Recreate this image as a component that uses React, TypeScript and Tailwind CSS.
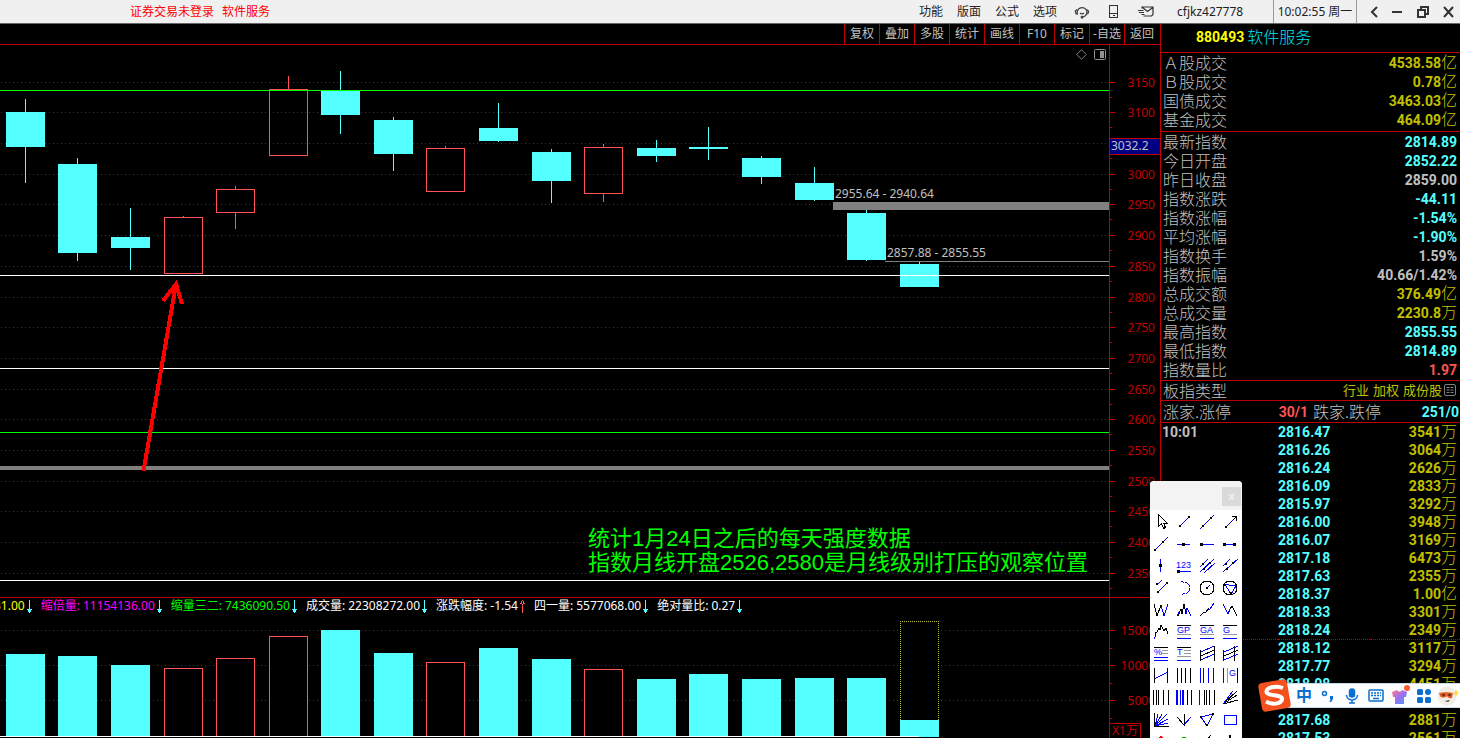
import type { ReactNode } from "react";
import clsx from "clsx";

const UI = "font-['Noto_Sans','Noto_Sans_CJK_SC',sans-serif]";
const NUM = "font-['Roboto','Noto_Sans_CJK_SC',sans-serif] text-sm leading-none font-bold";
const CJK = "font-['Noto_Sans_CJK_SC',sans-serif] text-base leading-none font-light";
const UNIT = "font-['Noto_Sans_CJK_SC',sans-serif] text-base leading-[0px] font-light";

const CYAN = "#54ffff";
const RISE = "#ff5454";
const RED = "#c00000";

interface Candle {
  x: number;
  high: number;
  low: number;
  top: number;
  bottom: number;
  vol: number;
  up?: boolean;
}

const candles: Candle[] = [
  { x: 6, high: 99, low: 183, top: 112, bottom: 147, vol: 654 },
  { x: 58, high: 158, low: 261, top: 164, bottom: 253, vol: 656 },
  { x: 111, high: 208, low: 270, top: 237, bottom: 248, vol: 665 },
  { x: 164, high: 216, low: 274, top: 217, bottom: 274, vol: 668, up: true },
  { x: 216, high: 186, low: 229, top: 189, bottom: 213, vol: 658, up: true },
  { x: 269, high: 76, low: 156, top: 89, bottom: 156, vol: 636, up: true },
  { x: 321, high: 71, low: 134, top: 91, bottom: 115, vol: 630 },
  { x: 374, high: 117, low: 171, top: 120, bottom: 154, vol: 653 },
  { x: 426, high: 146, low: 192, top: 148, bottom: 192, vol: 662, up: true },
  { x: 479, high: 103, low: 142, top: 128, bottom: 141, vol: 648 },
  { x: 532, high: 149, low: 203, top: 152, bottom: 181, vol: 659 },
  { x: 584, high: 144, low: 202, top: 147, bottom: 194, vol: 669, up: true },
  { x: 637, high: 140, low: 162, top: 148, bottom: 156, vol: 679 },
  { x: 689, high: 127, low: 160, top: 147, bottom: 149, vol: 674 },
  { x: 742, high: 156, low: 184, top: 158, bottom: 177, vol: 679 },
  { x: 795, high: 167, low: 201, top: 183, bottom: 200, vol: 678 },
  { x: 847, high: 210, low: 261, top: 213, bottom: 260, vol: 678 },
  { x: 900, high: 262, low: 287, top: 264, bottom: 287, vol: 720 },
];

const priceTicks = [
  { y: 82, label: "3150" },
  { y: 112, label: "3100" },
  { y: 143, label: "" },
  { y: 174, label: "3000" },
  { y: 204, label: "2950" },
  { y: 235, label: "2900" },
  { y: 266, label: "2850" },
  { y: 297, label: "2800" },
  { y: 327, label: "2750" },
  { y: 358, label: "2700" },
  { y: 389, label: "2650" },
  { y: 419, label: "2600" },
  { y: 450, label: "2550" },
  { y: 481, label: "2500" },
  { y: 511, label: "2450" },
  { y: 542, label: "2400" },
  { y: 573, label: "2350" },
];

const volumeTicks = [
  { y: 630, label: "15000" },
  { y: 665, label: "10000" },
  { y: 700, label: "5000" },
];

const turnover = [
  ["Ａ股成交", "4538.58", "亿"],
  ["Ｂ股成交", "0.78", "亿"],
  ["国债成交", "3463.03", "亿"],
  ["基金成交", "464.09", "亿"],
];

const indexStats = [
  ["最新指数", "2814.89", "", "text-[#54ffff]"],
  ["今日开盘", "2852.22", "", "text-[#54ffff]"],
  ["昨日收盘", "2859.00", "", "text-[#c0c0c0]"],
  ["指数涨跌", "-44.11", "", "text-[#54ffff]"],
  ["指数涨幅", "-1.54%", "", "text-[#54ffff]"],
  ["平均涨幅", "-1.90%", "", "text-[#54ffff]"],
  ["指数换手", "1.59%", "", "text-[#c0c0c0]"],
  ["指数振幅", "40.66/1.42%", "", "text-[#c0c0c0]"],
  ["总成交额", "376.49", "亿", "text-[#c0c000]"],
  ["总成交量", "2230.8", "万", "text-[#c0c000]"],
  ["最高指数", "2855.55", "", "text-[#54ffff]"],
  ["最低指数", "2814.89", "", "text-[#54ffff]"],
  ["指数量比", "1.97", "", "text-[#ff5454]"],
];

const deals = [
  ["10:01", "2816.47", "3541", "万"],
  ["", "2816.26", "3064", "万"],
  ["", "2816.24", "2626", "万"],
  ["", "2816.09", "2833", "万"],
  ["", "2815.97", "3292", "万"],
  ["", "2816.00", "3948", "万"],
  ["", "2816.07", "3169", "万"],
  ["", "2817.18", "6473", "万"],
  ["", "2817.63", "2355", "万"],
  ["", "2818.37", "1.00", "亿"],
  ["", "2818.33", "3301", "万"],
  ["", "2818.24", "2349", "万"],
  ["", "2818.12", "3117", "万"],
  ["", "2817.77", "3294", "万"],
  ["", "2818.08", "4451", "万"],
  ["", "", "", ""],
  ["", "2817.68", "2881", "万"],
  ["", "2817.53", "2561", "万"],
];

const indicators = [
  { name: "", value: "31.00", color: "text-[#ffff00]" },
  { name: "缩倍量:", value: "11154136.00", color: "text-[#ff00ff]" },
  { name: "缩量三二:", value: "7436090.50", color: "text-[#00ff00]" },
  { name: "成交量:", value: "22308272.00", color: "text-white" },
  { name: "涨跌幅度:", value: "-1.54", color: "text-white", up: true },
  { name: "四一量:", value: "5577068.00", color: "text-white" },
  { name: "绝对量比:", value: "0.27", color: "text-white" },
];

function TitleBar() {
  const iconBtn = "flex w-8 items-center justify-center";
  return (
    <header className={clsx(UI, "flex h-6 shrink-0 items-stretch border-b border-[#666] bg-[#f0f0f0] text-xs text-[#222]")}>
      <div className="flex flex-1 items-center gap-2 pl-[130px] text-[#ff0000]">
        <a href="#login">证券交易未登录</a>
        <a href="#board">软件服务</a>
      </div>
      <nav className="flex pr-[2px]">
        {["功能", "版面", "公式", "选项"].map((m) => (
          <button key={m} className="w-[38px]">{m}</button>
        ))}
      </nav>
      <button className={iconBtn} aria-label="客服">
        <svg width="16" height="14" viewBox="0 0 16 14" fill="none" stroke="#444" strokeWidth="1.3">
          <path d="M3.5 9.500A5 5 0 1 1 13 6.500c0 3-2 5.200-5 5.700" />
          <path d="M3.200 4.500 1.300 6l.7 2.600 1.700.4M13 4.600l1.600 1.600-.6 2.300-1.500.3M6 8c1.300 1.200 2.700 1.200 4 0" />
          <circle cx="8" cy="12.200" r="0.800" fill="#444" />
        </svg>
      </button>
      <button className={iconBtn} aria-label="手机">
        <svg width="10" height="14" viewBox="0 0 10 14" fill="none" stroke="#333" shapeRendering="crispEdges">
          <rect x="0.5" y="0.5" width="8" height="12" />
          <path d="M0 8.5h9M4 10.5h2" />
        </svg>
      </button>
      <button className={iconBtn} aria-label="邮件">
        <svg width="16" height="12" viewBox="0 0 16 12" fill="none" stroke="#333" strokeWidth="1.2">
          <path d="M4 2.5V1h11v7.5L13.5 10H5.5M4.5 1.5l5 4 5.3-4M0 4.5h5.5M1 6.5h5M3.5 8.5h3" />
        </svg>
      </button>
      <span className="flex w-[111px] items-center pl-[15px]">cfjkz427778</span>
      <span className="flex w-[84px] items-center justify-center border-x border-[#999] whitespace-pre">10:02:55 周一</span>
      <div className="flex w-[103px] items-center justify-between pr-[6px] pl-[13px]">
        <button aria-label="后退">
          <svg width="8" height="12" viewBox="0 0 8 12" fill="none" stroke="#333" strokeWidth="2"><path d="M7 1 2 6l5 5" /></svg>
        </button>
        <button aria-label="最小化">
          <svg width="10" height="12" viewBox="0 0 10 12"><path d="M0 5h10v2H0z" fill="#333" /></svg>
        </button>
        <button aria-label="还原">
          <svg width="12" height="12" viewBox="0 0 12 12" fill="none" stroke="#333" strokeWidth="2"><path d="M1 4h7v7H1zM4 4V1h7v7H8" /></svg>
        </button>
        <button aria-label="关闭">
          <svg width="11" height="12" viewBox="0 0 11 12" fill="none" stroke="#333" strokeWidth="2"><path d="m1 1 9 10M10 1 1 11" /></svg>
        </button>
      </div>
    </header>
  );
}

function Toolbar() {
  return (
    <div className={clsx(UI, "flex h-[21px] shrink-0 justify-end border-b border-[#c00000] pr-px text-xs text-[#c0c0c0]")}>
      {["复权", "叠加", "多股", "统计", "画线", "F10", "标记", "-自选", "返回"].map((t) => (
        <button key={t} className="w-[35px] border-l border-[#c00000] whitespace-nowrap">{t}</button>
      ))}
    </div>
  );
}

function Grid({ ticks }: { ticks: { y: number }[] }) {
  return (
    <>
      {ticks.map((t) => (
        <line key={t.y} x1="1" x2="100%" y1={t.y + 0.5} y2={t.y + 0.5} stroke={RED} strokeDasharray="1 3" />
      ))}
    </>
  );
}

function HLine({ y, color, h = 1, x = 0 }: { y: number; color: string; h?: number; x?: number }) {
  return <rect x={x} y={y} width="100%" height={h} fill={color} />;
}

function PricePanel() {
  return (
    <section className="flex min-h-0 flex-1 border-b border-[#c00000]">
      <div className="relative min-w-0 flex-1">
        <svg className="block h-full w-full" shapeRendering="crispEdges">
          {/* y values below count from the window top, the panel starts at 45 */}
          <g transform="translate(0,-45)">
            <Grid ticks={priceTicks} />
            {candles.map((c) =>
              c.up ? (
                <g key={c.x} stroke={RISE} fill="none">
                  <path d={`M${c.x + 19.5} ${c.high}V${c.top}M${c.x + 19.5} ${c.bottom}V${c.low}`} />
                  <rect x={c.x + 0.5} y={c.top + 0.5} width="38" height={c.bottom - c.top - 1} />
                </g>
              ) : (
                <g key={c.x} fill={CYAN}>
                  <rect x={c.x + 19} y={c.high} width="1" height={c.low - c.high} />
                  <rect x={c.x} y={c.top} width="39" height={c.bottom - c.top} />
                </g>
              ),
            )}
            <HLine y={90} color="#00ff00" />
            <HLine x={833} y={202} h={8} color="#808080" />
            <HLine x={885} y={261} color="#808080" />
            <HLine y={275} color="#fff" />
            <HLine y={368} color="#fff" />
            <HLine y={432} color="#00ff00" />
            <HLine y={466} h={4} color="#808080" />
            <HLine y={580} color="#fff" />
            <path d="M143.5 471 176 284M163 301l13-17 6 20" fill="none" stroke="#ff0000" strokeWidth="4" />
            <g className={clsx(UI, "text-xs")} fill="#c0c0c0">
              <text x="835" y="198">2955.64 - 2940.64</text>
              <text x="887" y="257">2857.88 - 2855.55</text>
            </g>
            <g className="font-['Liberation_Sans','Noto_Sans_CJK_SC',sans-serif] text-[22px]" fill="#00ff00">
              <text x="588" y="546">统计1月24日之后的每天强度数据</text>
              <text x="588" y="570">指数月线开盘2526,2580是月线级别打压的观察位置</text>
            </g>
          </g>
        </svg>
        <div className="absolute top-1 right-[3px] flex gap-[7px]">
          <button aria-label="标注">
            <svg width="11" height="11" viewBox="0 0 11 11" fill="none" stroke="#808080"><path d="M5.5.7 10.3 5.5 5.5 10.3.7 5.5z" /></svg>
          </button>
          <button aria-label="侧栏">
            <svg width="12" height="11" viewBox="0 0 12 11"><rect x="0.5" y="0.5" width="11" height="10" rx="1" fill="none" stroke="#909090" /><path d="M6 2h4v7H6z" fill="#909090" /></svg>
          </button>
        </div>
      </div>
      <svg className={clsx(UI, "h-full w-[51px] shrink-0 border-l border-[#c00000] text-xs")} shapeRendering="crispEdges">
        <g transform="translate(0,-45)" fill={RED}>
          {priceTicks.map((t) => (
            <g key={t.y}>
              <rect x="0" y={t.y} width="5" height="1" />
              <rect x="0" y={t.y + 15} width="2" height="1" />
              <text x="45" y={t.y + 5} textAnchor="end">{t.label}</text>
            </g>
          ))}
          <rect x="0" y="138" width="51" height="17" />
          <rect x="0" y="139" width="51" height="15" fill="#000080" />
          <text x="1" y="150" fill="#c0c0c0">3032.2</text>
        </g>
      </svg>
    </section>
  );
}

function IndicatorBar() {
  return (
    <div className="flex h-4 gap-2 overflow-hidden text-xs leading-4 whitespace-nowrap">
      {indicators.map((it, i) => (
        <span key={i} className={clsx("flex shrink-0 items-center", it.color, i === 0 && "-ml-[6px]")}>
          {it.name && <span className="mr-[3px]">{it.name}</span>}
          {it.value}
          <svg width="8" height="13" viewBox="0 0 8 13" fill={it.up ? RISE : CYAN} shapeRendering="crispEdges">
            <path d={it.up ? "M4 0h1v13H4zM2 4h5V3H6V1H3v2H2z" : "M4 0h1v13H4zM2 9h5v1H6v2H3v-2H2z"} />
          </svg>
        </span>
      ))}
    </div>
  );
}

function VolumePanel() {
  return (
    <section className={clsx(UI, "flex h-[140px] shrink-0")}>
      <div className="flex min-w-0 flex-1 flex-col">
        <IndicatorBar />
        <svg className="block w-full flex-1" shapeRendering="crispEdges">
          <g transform="translate(0,-614)">
            <Grid ticks={volumeTicks} />
            {candles.map((c) =>
              c.up ? (
                <rect key={c.x} x={c.x + 0.5} y={c.vol + 0.5} width="38" height={736 - c.vol} fill="#000" stroke={RISE} />
              ) : (
                <rect key={c.x} x={c.x} y={c.vol} width="39" height={737 - c.vol} fill={CYAN} />
              ),
            )}
            <path d="M900.5 720V621.5H938.5V720" fill="#000" stroke="#c0c040" strokeDasharray="1 1" />
            <rect x="0" y="736" width="919" height="1" fill="#fff" />
          </g>
        </svg>
      </div>
      <svg className="h-full w-[51px] shrink-0 border-l border-[#c00000] text-xs" shapeRendering="crispEdges">
        <g transform="translate(0,-598)" fill={RED}>
          {volumeTicks.map((t) => (
            <g key={t.y}>
              <rect x="0" y={t.y} width="5" height="1" />
              <rect x="0" y={t.y + 18} width="2" height="1" />
              <text x="45" y={t.y + 5} textAnchor="end">{t.label}</text>
            </g>
          ))}
          <rect x="-0.5" y="723.5" width="31" height="16" fill="none" stroke={RED} />
          <text x="2" y="735">X1万</text>
        </g>
      </svg>
    </section>
  );
}

function StatTable({ rows, color }: { rows: string[][]; color?: string }) {
  return (
    <table className="w-full">
      <tbody>
        {rows.map(([label, value, unit, tone]) => (
          <tr key={label} className="h-[19px]">
            <th scope="row" className={clsx(CJK, "p-0 pb-[2px] text-left text-[#c0c0c0]")}>{label}</th>
            <td className={clsx(NUM, "p-0 text-right", tone ?? color)}>
              {value}
              {unit && <span className={UNIT}>{unit}</span>}
            </td>
          </tr>
        ))}
      </tbody>
    </table>
  );
}

function QuotePanel() {
  return (
    <aside className="flex w-[300px] shrink-0 flex-col overflow-hidden border-l border-[#c00000]">
      <h1 className="flex h-[29px] shrink-0 items-center gap-[3px] border-b border-[#c00000] pb-[2px] pl-[35px]">
        <span className={clsx(NUM, "text-[#ffff00]")}>880493</span>
        <span className={clsx(CJK, "pb-[2px] text-[#00e0f0]")}>软件服务</span>
      </h1>
      <div className="shrink-0 border-b border-[#c00000] pr-[3px] pb-[2px] pl-[2px]">
        <StatTable rows={turnover} color="text-[#c0c000]" />
      </div>
      <div className="shrink-0 border-b border-[#c00000] pr-[3px] pb-px pl-[2px]">
        <StatTable rows={indexStats} />
      </div>
      <div className="flex h-5 shrink-0 items-center justify-between border-b border-[#c00000] pr-1 pb-[2px] pl-[2px]">
        <span className={clsx(CJK, "text-[#c0c0c0]")}>板指类型</span>
        <span className="flex items-center gap-1 font-['Noto_Sans_CJK_SC',sans-serif] text-[13px] leading-none text-[#c0c000]">
          <a href="#industry">行业</a>
          <a href="#weight">加权</a>
          <a href="#members">成份股</a>
          <svg className="-ml-[2px]" width="12" height="12" viewBox="0 0 12 12" fill="none" stroke="#808080">
            <rect x="0.5" y="0.5" width="11" height="11" rx="1.5" />
            <path d="M2.5 3.5h3M2.5 6h3M2.5 8.5h3M6.5 3.5h3M6.5 6h3M6.5 8.5h3" />
          </svg>
        </span>
      </div>
      <div className="flex h-[22px] shrink-0 items-center border-b border-[#c00000] pr-px pl-[2px] text-[#c0c0c0]">
        <span className={clsx(CJK, "pb-[2px]")}>涨家.涨停</span>
        <span className={clsx(NUM, "flex-1 text-right text-[#ff5454]")}>30/1</span>
        <span className={clsx(CJK, "ml-[5px] pb-[2px]")}>跌家.跌停</span>
        <span className={clsx(NUM, "w-[78px] text-right text-[#54ffff]")}>251/0</span>
      </div>
      <table className="w-full">
        <tbody>
          {deals.map(([time, price, amount, unit], i) => (
            <tr key={i} className={clsx("h-[18px]", i === 11 && "border-b border-dotted border-[#c00000]")}>
              <td className={clsx(NUM, "w-[117px] p-0 pl-px text-[#c0c0c0]")}>{time}</td>
              <td className={clsx(NUM, "p-0 text-[#54ffff]")}>{price}</td>
              <td className={clsx(NUM, "p-0 pr-[3px] text-right text-[#c0c000]")}>
                {amount}
                <span className={UNIT}>{unit}</span>
              </td>
            </tr>
          ))}
        </tbody>
      </table>
    </aside>
  );
}

const K = (d: string) => <path d={d} stroke="#000" />;
const B = (d: string) => <path d={d} stroke="#0000ff" />;
const G = (d: string) => <path d={d} stroke="#999" />;
const dot = (x: number, y: number, s = 2) => <rect x={x - s / 2} y={y - s / 2} width={s} height={s} fill="#000" stroke="none" />;
const mark = (t: string, x = 4, y = 13) => (
  <text x={x} y={y} className="font-['Liberation_Sans',sans-serif] text-[9px]" fill="#0000ff" stroke="none">{t}</text>
);

const tools: { name: string; art: ReactNode }[] = [
  { name: "选择", art: <path d="M8.5 4.5v12l3-3 2 5 2-1-2-4.500h3.500z" fill="#fff" stroke="#000" /> },
  { name: "线段", art: <>{B("M7 16 16 7")}{dot(7, 16)}{dot(16, 7)}</> },
  { name: "直线", art: <>{B("M4 19 18 5")}{dot(7, 16)}{dot(15, 8)}</> },
  { name: "箭头", art: <>{B("M7 17 17 7")}{K("M13 6.5h4.500v4.500M17 7l-3 3")}{dot(7, 17)}</> },
  { name: "射线", art: <>{B("M5 18 18 5")}{dot(5, 18)}{dot(13, 10)}</> },
  { name: "水平线", art: <>{B("M4 12.5h13")}{dot(10.5, 12.5, 3)}</> },
  { name: "水平射线", art: <>{B("M4 12.5h14")}{dot(5.5, 12.5, 3)}</> },
  { name: "水平线段", art: <>{B("M4 12.5h13")}{dot(5.5, 12.5, 3)}{dot(15.5, 12.5, 3)}</> },
  { name: "垂直线", art: <>{B("M10.5 5v13")}{dot(10.5, 11.5, 3)}</> },
  { name: "价格标注", art: <>{mark("123", 3, 14)}{B("M4 17.5h14")}{dot(5.5, 17.5, 3)}</> },
  { name: "平行线组", art: <>{B("M4 13 12 5M4 18 18 5M8 19 19 9")}{dot(7, 10)}{dot(8, 15)}{dot(14, 9)}</> },
  { name: "平行线", art: <>{B("M4 12 11 5M4 18 19 5")}{dot(7, 10)}{dot(8, 15)}{dot(14, 9)}</> },
  { name: "通道", art: <>{B("M7 9 12 4M7 17 18 6")}{dot(7, 8)}{dot(8, 16)}{dot(17, 7)}</> },
  { name: "弧线", art: <path d="M8 6c12-1 12 13 0 12" fill="none" stroke="#0000ff" strokeDasharray="3 1" /> },
  { name: "圆", art: <><circle cx="11" cy="12" r="7" stroke="#000" />{B("M11 12l3-3")}{dot(11, 12)}</> },
  { name: "外接圆", art: <><circle cx="11" cy="12" r="7" stroke="#000" />{B("M6 8.5l11 1.500-5 8z")}{dot(6, 9)}{dot(12, 17)}</> },
  { name: "W形", art: <>{K("M4 6l3 12 4-11")}{B("M11 7l3 11 4-12")}</> },
  { name: "头肩", art: <>{K("M5 18l3-7 1 5 2-10 2 10")}{B("M4 18l2-4M13 16l1-6 4 8")}</> },
  { name: "上升浪", art: <>{K("M4 18l4-4h2l3-4")}{B("M12 11h2l4-6")}</> },
  { name: "下降浪", art: <>{B("M4 6l5 10 2-5")}{K("M11 11l2-3 5 10")}</> },
  { name: "八浪", art: <>{B("M4 19l2-4")}{K("M5 17v-5h2l2-4 1 2 1-5 3 6 2-3 2 6")}</> },
  { name: "黄金价位", art: <>{K("M4 5.5h14")}{mark("GP")}{G("M4 14.5h14")}{B("M4 18.5h14")}</> },
  { name: "黄金目标", art: <>{K("M4 5.5h14")}{mark("GA")}{G("M4 14.5h14")}{B("M4 18.5h14")}</> },
  { name: "黄金分割", art: <>{K("M4 5.5h14")}{mark("G")}{G("M4 14.5h14")}{B("M4 18.5h14")}</> },
  { name: "百分比", art: <>{K("M4 5.5h14")}{mark("%")}{G("M12 8.5h6M12 11.5h6")}{B("M4 15.5h14M4 18.5h14")}</> },
  { name: "波段线", art: <>{K("M4 5.5h14")}{mark("T", 4, 13)}{G("M11 8.5h7M11 11.5h7M4 14.5h14")}{B("M4 18.5h14")}</> },
  { name: "线性回归带", art: <>{K("M4.5 8v11M18.500 4v15M5 14l13-6")}{B("M5 10l13-6M5 18l13-6")}</> },
  { name: "延长回归带", art: <>{K("M4.5 8v11M15.500 4v15M5 14l14-6")}{B("M5 10l14-6M5 18l14-6")}</> },
  { name: "回归线", art: <>{K("M4.5 4v15M17.500 4v15")}{B("M5 14.5l12-6")}</> },
  { name: "周期线", art: K("M4.5 4v15M8.500 4v15M12.500 4v15M17.500 4v15") },
  { name: "等周期", art: B("M4.5 4v15M7.500 4v15M12.500 4v15M17.500 4v15") },
  { name: "黄金周期", art: <>{B("M4.5 4v15")}{G("M8.5 4v15")}{mark("G", 10, 12)}{K("M18.5 4v15")}</> },
  { name: "斐波那契", art: K("M3.5 4v15M6.500 4v15M8.500 4v15M13.500 4v15M18.500 4v15") },
  { name: "江恩周期", art: <>{B("M3.5 4v15M4.500 4v15M7.500 4v15M9.500 4v15M10.500 4v15")}{K("M14.5 4v15M18.500 4v15")}</> },
  { name: "阳历周期", art: <>{B("M3.5 4v15")}{K("M8.5 4v15M10.500 4v15M13.500 4v15M18.500 4v15")}</> },
  { name: "阻速线", art: <>{K("M4 18 18 5M4 18l14-9")}{B("M4 18l10-13")}{K("M4 18l15-4")}</> },
  { name: "江恩角度", art: <>{K("M4.5 5v14M4 18.5h15")}{B("M5 18l3-12M5 18 12 6M5 18 17 6M5 18l13-7M5 18l13-3")}</> },
  { name: "安德鲁叉", art: <>{K("M4 9l7 8V6")}{B("M11 17l7-8")}</> },
  { name: "三角形", art: <>{B("M5 9l12-3-6 12z")}{dot(5, 9)}{dot(17, 6)}{dot(11, 17)}</> },
  { name: "矩形", art: B("M5.5 7.5h12v9h-12z") },
  { name: "买入标记", art: <path d="M11 5 6 11h3v6h4v-6h3z" fill="#ff0000" stroke="none" /> },
  { name: "卖出标记", art: <path d="M11 17 6 11h3V7h4v4h3z" fill="#00a000" stroke="none" /> },
  { name: "画笔", art: <>{K("M6 16 15 5")}{B("M4 18l3-2")}</> },
  { name: "文字", art: K("M11 5 7 16M11 5l4 11M8 12h6") },
];

function DrawPalette() {
  return (
    <div className="absolute top-[481px] right-[218px] bottom-0 w-[92px] overflow-hidden rounded-t bg-white">
      <div className="flex h-[29px] items-center justify-end bg-[#f3f3f3] pt-[2px] pr-px">
        <button aria-label="关闭画线工具" className="h-[19px] w-[19px] bg-[#dadada] font-['Liberation_Sans',sans-serif] text-[11px] leading-none font-bold text-[#f3f3f3]">x</button>
      </div>
      <div className="grid grid-cols-4">
        {tools.map((t) => (
          <button key={t.name} aria-label={t.name} className="h-[22px]">
            <svg className="block" width="23" height="22" viewBox="0 0 23 22" fill="none" shapeRendering="crispEdges">{t.art}</svg>
          </button>
        ))}
      </div>
    </div>
  );
}

function ImeBar() {
  const cell = "flex h-full w-6 items-center justify-center";
  return (
    <div className="absolute right-0 bottom-[30px] flex h-[25px] w-[198px] items-center rounded-l-md border-y border-[#c8dcf0] bg-[#fbfdff] pl-[30px]">
      <svg className="absolute -top-[5px] -left-1" width="33" height="33" viewBox="0 0 33 33">
        <rect x="2" y="2" width="29" height="29" rx="4" fill="#f4511e" transform="rotate(-10 16.500 16.500)" />
        <path d="M25 9C18 6 8 8.500 8.500 13c.5 4 15 2.500 15.500 6.500.4 5-9 7-16 3" fill="none" stroke="#fff" strokeWidth="4" />
      </svg>
      <button className={clsx(cell, "pb-[3px] font-['Noto_Sans_CJK_SC',sans-serif] text-base leading-none font-bold text-[#0b6fd0]")}>中</button>
      <button className={cell} aria-label="标点">
        <svg width="14" height="14" viewBox="0 0 14 14" fill="none" stroke="#0b6fd0" strokeWidth="1.500">
          <circle cx="3.500" cy="4.500" r="2" />
          <path d="M9 7h3v3l-2 3H8.500l1-3H9z" fill="#0b6fd0" stroke="none" />
        </svg>
      </button>
      <button className={cell} aria-label="语音">
        <svg width="14" height="16" viewBox="0 0 14 16" fill="none" stroke="#0b6fd0" strokeWidth="1.500">
          <rect x="4.500" y="1" width="5" height="8" rx="2.500" fill="#0b6fd0" />
          <path d="M1.500 7c0 6.500 11 6.500 11 0M7 12v3M4 15h6" />
        </svg>
      </button>
      <button className={cell} aria-label="软键盘">
        <svg width="16" height="13" viewBox="0 0 16 13" fill="none" stroke="#0b6fd0" strokeWidth="1.500">
          <rect x="1" y="1" width="14" height="11" rx="1" />
          <path d="M3 4h10M3 6.500h10" strokeDasharray="2 1" />
          <path d="M5 9.500h6" />
        </svg>
      </button>
      <button className={cell} aria-label="皮肤">
        <svg width="20" height="24" viewBox="0 0 20 24">
          <defs>
            <linearGradient id="shirt" x1="0" y1="0" x2="1" y2="1">
              <stop offset="0" stopColor="#ff7a8a" />
              <stop offset="0.500" stopColor="#a070f0" />
              <stop offset="1" stopColor="#30a0ff" />
            </linearGradient>
          </defs>
          <path d="M2 8l5-2c1 2 4 2 5 0l5 2-1 5h-2v7H5v-7H3z" fill="url(#shirt)" />
          <circle cx="17" cy="4" r="3" fill="#ff5a30" />
        </svg>
      </button>
      <button className={cell} aria-label="工具箱">
        <svg width="14" height="14" viewBox="0 0 14 14" fill="#0b6fd0">
          <rect width="6" height="6" rx="1.500" />
          <circle cx="11" cy="3" r="3" />
          <rect y="8" width="6" height="6" rx="1.500" />
          <rect x="8" y="8" width="6" height="6" rx="1.500" />
        </svg>
      </button>
      <button className={cell} aria-label="头像">
        <svg width="22" height="22" viewBox="0 0 22 22">
          <circle cx="10" cy="11" r="9.500" fill="#f1ece6" />
          <path d="M2 8c4-1 10-1 14 0l-1 5c-3 1-4-1-5-2-2 2-6 2-7 0z" fill="#e8591c" />
          <circle cx="6.500" cy="10" r="1.200" fill="#333" />
          <circle cx="12.500" cy="10" r="1.200" fill="#333" />
          <path d="M8 16c2 1.500 4 1 5-1z" fill="#444" />
          <path d="m19 4 1 3 2 1-2 1-1 3-1-3-2-1 2-1z" fill="#ffd23a" />
        </svg>
      </button>
    </div>
  );
}

export default function App() {
  return (
    <div className="relative flex h-screen flex-col overflow-hidden bg-black">
      <TitleBar />
      <div className="flex min-h-0 flex-1">
        <main className="flex min-w-0 flex-1 flex-col">
          <Toolbar />
          <PricePanel />
          <VolumePanel />
        </main>
        <QuotePanel />
      </div>
      <DrawPalette />
      <ImeBar />
    </div>
  );
}
